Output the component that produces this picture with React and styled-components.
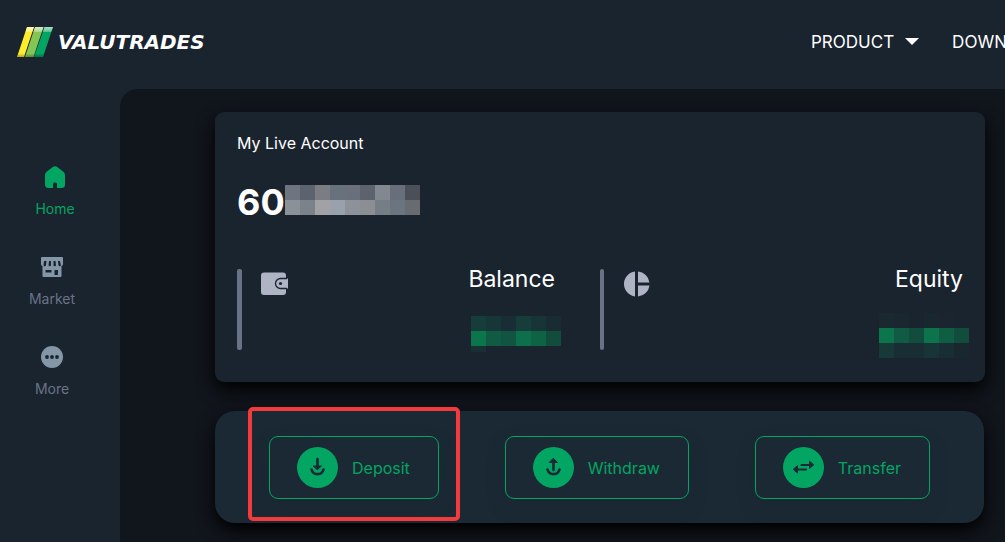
import React from 'react';
import styled, { createGlobalStyle, ThemeProvider } from 'styled-components';

const theme = {
  colors: {
    panel: '#1a242f',
    actions: '#1b2935',
    page: '#11151c',
    green: '#03a562',
    muted: '#697386',
    icon: '#8497a6',
    marker: '#f33b3b',
  },
  font: "Inter, 'Open Sans', sans-serif",
};

const GlobalStyle = createGlobalStyle`
  * {
    box-sizing: border-box;
  }

  body {
    margin: 0;
    overflow: hidden;
    background-color: ${props => props.theme.colors.panel};
    color: white;
    font-family: ${props => props.theme.font};
  }
`;

const Page = styled.div`
  display: flex;
  flex-direction: column;
  height: 100vh;
  overflow: hidden;
`;

const Header = styled.header`
  display: flex;
  flex: none;
  justify-content: space-between;
  align-items: center;
  height: 89px;
  padding: 0 0 6px 16px;
`;

const LogoLink = styled.a`
  display: flex;
  color: white;
`;

const Nav = styled.nav`
  display: flex;
  width: 194px;
  gap: 32px;
  overflow: hidden;
`;

const NavLink = styled.a`
  display: flex;
  flex: none;
  align-items: center;
  gap: 10px;
  color: white;
  font-size: 17px;
  line-height: 20px;
  text-decoration: none;
`;

const Body = styled.div`
  display: flex;
  flex: 1;
  min-height: 0;
`;

const Sidebar = styled.nav`
  display: flex;
  flex: none;
  flex-direction: column;
  align-items: center;
  gap: 34px;
  width: 120px;
  padding: 74px 16px 0 0;
`;

const SideLink = styled.a`
  display: flex;
  flex-direction: column;
  align-items: center;
  gap: 8px;
  margin-left: ${props => (props.$active ? '6px' : '0')};
  color: ${props => (props.$active ? props.theme.colors.green : props.theme.colors.muted)};
  font-size: 14px;
  line-height: 20px;
  text-decoration: none;

  svg {
    color: ${props => (props.$active ? props.theme.colors.green : props.theme.colors.icon)};
  }
`;

const Main = styled.main`
  display: flex;
  flex: 1;
  flex-direction: column;
  gap: 29px;
  min-width: 0;
  padding: 23px 20px 20px 95px;
  border-top-left-radius: 18px;
  background-color: ${props => props.theme.colors.page};
`;

const Card = styled.section`
  flex: none;
  padding: 21px 22px 24px;
  border-radius: 9px;
  background-color: ${props => props.theme.colors.panel};
  box-shadow: 0 8px 18px black;
`;

const CardTitle = styled.h1`
  margin: 0;
  font-size: 16px;
  font-weight: 400;
  line-height: 20px;
`;

const AccountNumber = styled.div`
  display: flex;
  align-items: flex-start;
  height: 34px;
  margin-top: 32px;
  font-size: 36px;
  font-weight: 700;
  line-height: 34px;
`;

const Stats = styled.div`
  display: grid;
  grid-template-columns: 1fr 1fr;
  margin-top: 50px;
`;

const Stat = styled.div`
  display: flex;
  align-items: flex-start;
  margin-right: ${props => props.$end};

  > svg {
    flex: none;
    margin-left: 18px;
  }
`;

const StatBar = styled.span`
  flex: none;
  width: ${props => props.$width};
  height: 81px;
  border-radius: 2px;
  background-color: ${props => props.theme.colors.muted};
`;

const StatText = styled.div`
  display: flex;
  flex: 1;
  flex-direction: column;
  align-items: flex-end;
  gap: ${props => props.$gap};
`;

const StatLabel = styled.h2`
  margin: 0 6px 0 0;
  font-size: 23px;
  font-weight: 400;
  line-height: 20px;
`;

const Actions = styled.section`
  display: flex;
  flex: none;
  justify-content: space-between;
  margin-right: 1px;
  padding: 25px 54px 24px;
  border-radius: 20px;
  background-color: ${props => props.theme.colors.actions};
  box-shadow: 0 8px 18px black;
`;

const ActionButton = styled.button`
  position: relative;
  display: flex;
  align-items: center;
  gap: 14px;
  height: 63px;
  padding: 0 28px 0 27px;
  border: 1px solid ${props => props.theme.colors.green};
  border-radius: 9px;
  background-color: transparent;
  box-shadow: 0 8px 18px rgba(27, 35, 46, 0.3);
  color: ${props => props.theme.colors.green};
  font-family: inherit;
  font-size: 16px;
  line-height: 20px;
  cursor: pointer;
`;

const Marker = styled.span`
  position: absolute;
  inset: -30px -22px -23px -22px;
  border: 4px solid ${props => props.theme.colors.marker};
  border-radius: 5px;
  pointer-events: none;
`;

const numberMask = [
  ['#6e7480', '#5d636e', '#7c7c84', '#67727d', '#69707b', '#5d626d', '#828790', '#696e7b', '#4b4f57'],
  ['#8a9199', '#7b8289', '#a2a1a6', '#98a1ac', '#8d9199', '#8b8e92', '#757d85', '#6a757f', '#686b70'],
];

const balanceMask = [
  ['#163d3a', '#173638', '#182d35', '#163d3a', '#173436', '#192c34'],
  ['#0b764c', '#115a43', '#115440', '#0d6f4c', '#0f6345', '#124c3d'],
  ['#182f34'],
];

const equityMask = [
  ['#19292f', '#1a2730', '#1a242f', '#19272f', '#1a252f', '#1a242f'],
  ['#0b764c', '#115a43', '#124c3d', '#0d734d', '#0f5e43', '#124c3d'],
  ['#173a38', '#182e34', '#182e34', '#173537', '#182d34', '#19282f'],
];

const Mosaic = ({ rows, height, label }) => (
  <svg
    width={rows[0].length * 15}
    height={height}
    role="img"
    aria-label={label}
    shapeRendering="crispEdges"
  >
    {rows.map((row, y) =>
      row.map((fill, x) => (
        <rect key={`${x}-${y}`} x={x * 15} y={y * 15} width="15" height="15" fill={fill} />
      ))
    )}
  </svg>
);

const Logo = () => (
  <svg width="200" height="32" viewBox="0 0 200 32" role="img" aria-label="Valutrades">
    <defs>
      <linearGradient id="shine" x1="0" y1="0" x2="0" y2="1">
        <stop offset="0" stopColor="white" stopOpacity="0.65" />
        <stop offset="0.14" stopColor="white" stopOpacity="0.4" />
        <stop offset="0.18" stopColor="white" stopOpacity="0" />
        <stop offset="0.88" stopColor="black" stopOpacity="0" />
        <stop offset="1" stopColor="black" stopOpacity="0.3" />
      </linearGradient>
    </defs>
    <path d="M11 1h7L8 31H1z" fill="#ffec2d" />
    <path d="M19 1h8.500L17.500 31H9z" fill="#84c553" />
    <path d="M28.500 1H37L27 31h-9z" fill="#03a562" />
    <path d="M11 1h7L8 31H1zM19 1h8.500L17.500 31H9zM28.500 1H37L27 31h-9z" fill="url(#shine)" />
    <text
      x="42"
      y="23"
      fill="white"
      fontFamily="'DejaVu Sans', sans-serif"
      fontSize="20"
      fontWeight="700"
      fontStyle="italic"
    >
      VALUTRADES
    </text>
  </svg>
);

const HomeIcon = () => (
  <svg width="24" height="28" viewBox="0 0 24 28" fill="currentColor">
    <path d="M9.800 4.100a3.500 3.500 0 0 1 4.400 0l6.200 4.700A4 4 0 0 1 22 12v9.500a3.500 3.500 0 0 1-3.500 3.500H14v-4a1.500 1.500 0 0 0-1.500-1.500h-1A1.500 1.500 0 0 0 10 21v4H5.500A3.500 3.500 0 0 1 2 21.500V12a4 4 0 0 1 1.600-3.200z" />
  </svg>
);

const MarketIcon = () => (
  <svg width="24" height="28" viewBox="0 0 24 28">
    <path
      d="M2 4h20a1 1 0 0 1 1 1v6c0 1-.6 1.700-1.500 2v10a1 1 0 0 1-1 1h-17a1 1 0 0 1-1-1V13C1.600 12.700 1 12 1 11V5a1 1 0 0 1 1-1z"
      fill="currentColor"
    />
    <path
      d="M4 8h2.500L6 12.500c-.5 1-2.300 1-2.500 0zM9 8h2v4.500c-.5 1-2.200 1-2.500 0zM13.500 8h2l.5 4.500c-.4 1-2 1-2.500 0zM18 8h2l1 4.500c-.5 1-2 1-2.500 0zM5.500 17h6v2.500h-6zM14.500 17h3.500v5h-3.500z"
      fill="#1a242f"
    />
  </svg>
);

const MoreIcon = () => (
  <svg width="24" height="28" viewBox="0 0 24 28">
    <circle cx="12" cy="14" r="11" fill="currentColor" />
    <circle cx="7" cy="14" r="1.900" fill="#1a242f" />
    <circle cx="12" cy="14" r="1.900" fill="#1a242f" />
    <circle cx="17" cy="14" r="1.900" fill="#1a242f" />
  </svg>
);

const WalletIcon = () => (
  <svg width="30" height="30" viewBox="0 0 30 30">
    <rect x="1" y="3.500" width="25" height="22.500" rx="3" fill="#aeb4c4" />
    <path d="M28 9.500h-7.500a5 5 0 0 0 0 10H28z" fill="#aeb4c4" />
    <path d="M27 9.500h-6.500a5 5 0 0 0 0 10H27" fill="none" stroke="#1a242f" strokeWidth="1.300" />
    <circle cx="20.500" cy="14.500" r="1.600" fill="#1a242f" />
  </svg>
);

const PieIcon = () => (
  <svg width="30" height="30" viewBox="0 0 30 30" fill="#aeb4c4">
    <path d="M13 2.500v25a12.600 12.600 0 0 1 0-25zM16 2.500A12.600 12.600 0 0 1 27.500 13.500H16zM16 16.500h11.500A12.600 12.600 0 0 1 16 27.500z" />
  </svg>
);

const icons = {
  deposit: (
    <>
      <path d="M20.500 12v9M14.500 22.500a6.200 6.200 0 0 0 12 0" />
      <path d="M16.500 19h8L20.500 22.500z" fill="#1b2935" strokeWidth="1" />
    </>
  ),
  withdraw: (
    <>
      <path d="M20.500 14v9M14.500 22.500a6.200 6.200 0 0 0 12 0" />
      <path d="M16.500 15.500h8L20.500 11.500z" fill="#1b2935" strokeWidth="1" />
    </>
  ),
  transfer: (
    <>
      <path d="M18.500 18h8M14.500 22.500h8.500" strokeWidth="2.200" />
      <path d="M26.500 14.500v7l4-3.500zM14.500 19v7l-4-3.500z" fill="#1b2935" strokeWidth="1" />
    </>
  ),
};

const ActionIcon = ({ name }) => (
  <svg
    width="41"
    height="41"
    viewBox="0 0 41 41"
    fill="none"
    stroke="#1b2935"
    strokeWidth="2.600"
    strokeLinecap="round"
    strokeLinejoin="round"
  >
    <circle cx="20.500" cy="20.500" r="20.500" fill="#03a562" stroke="none" />
    {icons[name]}
  </svg>
);

const App = () => (
  <ThemeProvider theme={theme}>
    <GlobalStyle />
    <Page>
      <Header>
        <LogoLink href="#home">
          <Logo />
        </LogoLink>
        <Nav>
          <NavLink href="#product">
            PRODUCT
            <svg width="16" height="8" viewBox="0 0 16 8" fill="currentColor">
              <path d="M1 0h14L8 7z" />
            </svg>
          </NavLink>
          <NavLink href="#download">DOWNLOAD</NavLink>
        </Nav>
      </Header>
      <Body>
        <Sidebar>
          <SideLink href="#home" $active>
            <HomeIcon />
            Home
          </SideLink>
          <SideLink href="#market">
            <MarketIcon />
            Market
          </SideLink>
          <SideLink href="#more">
            <MoreIcon />
            More
          </SideLink>
        </Sidebar>
        <Main>
          <Card>
            <CardTitle>My Live Account</CardTitle>
            <AccountNumber>
              60
              <Mosaic rows={numberMask} height={30} label="Hidden account number" />
            </AccountNumber>
            <Stats>
              <Stat $end="39px">
                <StatBar $width="5px" />
                <WalletIcon />
                <StatText $gap="27px">
                  <StatLabel>Balance</StatLabel>
                  <Mosaic rows={balanceMask} height={36} label="Hidden balance" />
                </StatText>
              </Stat>
              <Stat $end="-6px">
                <StatBar $width="4px" />
                <PieIcon />
                <StatText $gap="24px">
                  <StatLabel>Equity</StatLabel>
                  <Mosaic rows={equityMask} height={45} label="Hidden equity" />
                </StatText>
              </Stat>
            </Stats>
          </Card>
          <Actions>
            <ActionButton type="button">
              <ActionIcon name="deposit" />
              Deposit
              <Marker />
            </ActionButton>
            <ActionButton type="button">
              <ActionIcon name="withdraw" />
              Withdraw
            </ActionButton>
            <ActionButton type="button">
              <ActionIcon name="transfer" />
              Transfer
            </ActionButton>
          </Actions>
        </Main>
      </Body>
    </Page>
  </ThemeProvider>
);

export default App;
